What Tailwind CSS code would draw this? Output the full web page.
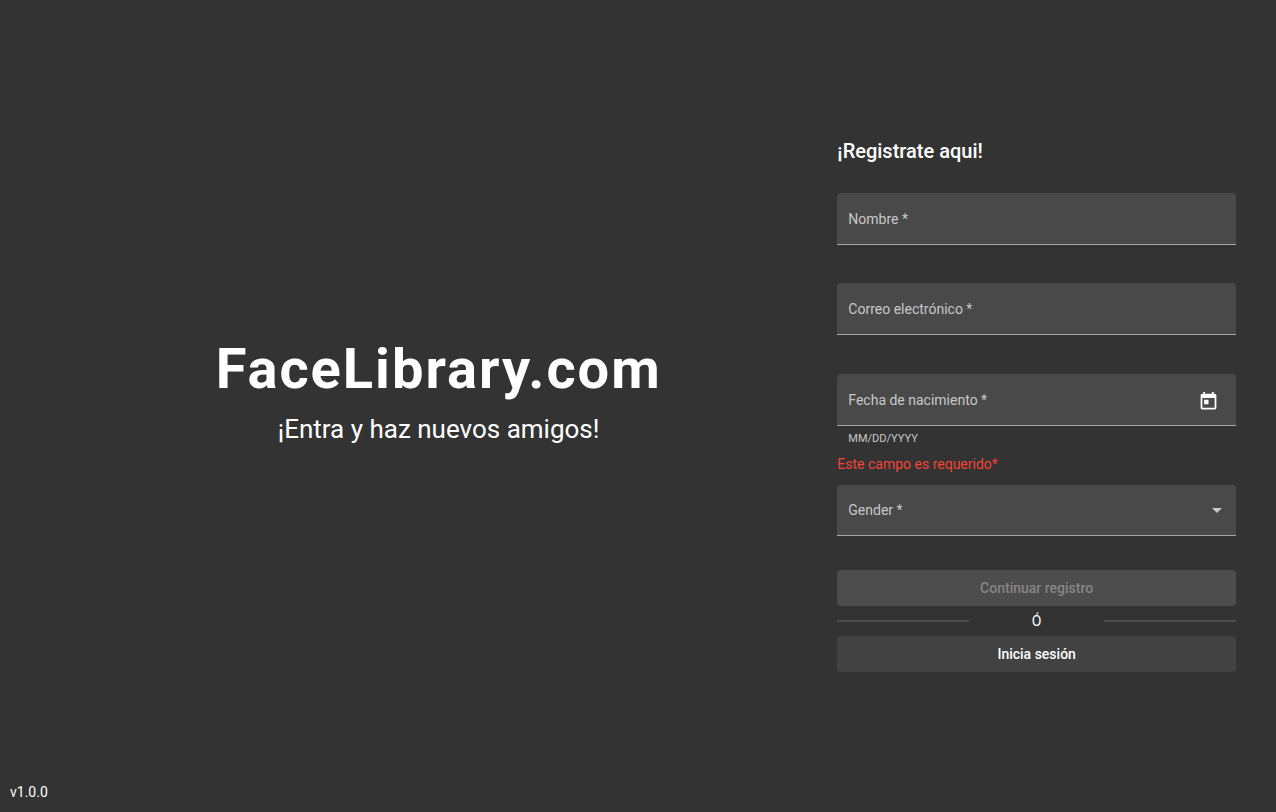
<!DOCTYPE html>
<html lang="es">
<head>
<meta charset="utf-8">
<meta name="viewport" content="width=device-width, initial-scale=1">
<title>FaceLibrary.com</title>
<script src="https://cdn.jsdelivr.net/npm/@tailwindcss/browser@4"></script>
</head>
<body class="flex min-h-screen flex-col bg-[#333333] font-[Roboto,sans-serif] text-sm text-white">
  <main class="grid flex-1 grid-cols-1 items-center px-10 pt-6 md:grid-cols-3">
    <section class="pb-6 text-center md:col-span-2">
      <h1 class="text-[56px] leading-16 font-bold tracking-[2px]">FaceLibrary.com</h1>
      <p class="mt-3 text-[26px] leading-8">¡Entra y haz nuevos amigos!</p>
    </section>

    <form class="flex flex-col">
      <h2 class="mb-[26px] text-xl leading-8 font-medium">¡Registrate aqui!</h2>

      <div class="relative mb-[38px]">
        <input id="name" type="text" required class="block h-[52px] w-full rounded-t border-b border-[#a6a6a6] bg-[#494949] px-[11px] outline-none">
        <label for="name" class="pointer-events-none absolute inset-0 flex items-center px-[11px] text-[#c8c8c8]">Nombre *</label>
      </div>

      <div class="relative mb-[39px]">
        <input id="email" type="email" required class="block h-[52px] w-full rounded-t border-b border-[#a6a6a6] bg-[#494949] px-[11px] outline-none">
        <label for="email" class="pointer-events-none absolute inset-0 flex items-center px-[11px] text-[#c8c8c8]">Correo electrónico *</label>
      </div>

      <div class="relative">
        <input id="birth" type="text" required aria-describedby="birth-hint birth-error" class="block h-[52px] w-full rounded-t border-b border-[#a6a6a6] bg-[#494949] px-[11px] outline-none">
        <label for="birth" class="pointer-events-none absolute inset-0 flex items-center px-[11px] text-[#c8c8c8]">Fecha de nacimiento *</label>
        <button type="button" aria-label="Abrir calendario" class="absolute inset-y-0 right-[7px] flex w-10 items-center justify-center pt-[3px]">
          <svg class="size-[21px]" viewBox="0 0 24 24" fill="currentColor" aria-hidden="true"><path d="M19 3h-1V1h-2v2H8V1H6v2H5c-1.11 0-1.99.9-1.99 2L3 19c0 1.1.89 2 2 2h14c1.1 0 2-.9 2-2V5c0-1.1-.9-2-2-2zm0 16H5V8h14v11zM7 10h5v5H7z"/></svg>
        </button>
      </div>
      <p id="birth-hint" class="mt-[5px] px-[11px] text-[11px] leading-4 text-[#c8c8c8]">MM/DD/YYYY</p>
      <p id="birth-error" class="mt-[7px] mb-[11px] leading-5 text-[#f44336]">Este campo es requerido*</p>

      <div class="relative mb-[34px]">
        <select id="gender" required class="block h-[51px] w-full appearance-none rounded-t border-b border-[#a6a6a6] bg-[#494949] px-[11px] outline-none">
          <option value=""></option>
        </select>
        <label for="gender" class="pointer-events-none absolute inset-0 flex items-center px-[11px] text-[#c8c8c8]">Gender *</label>
        <span class="pointer-events-none absolute inset-y-0 right-[14px] flex items-center">
          <svg class="h-[5px] w-[10px]" viewBox="0 0 10 5" fill="#c8c8c8" aria-hidden="true"><path d="M0 0h10L5 5z"/></svg>
        </span>
      </div>

      <button type="submit" disabled class="h-9 rounded bg-[#4d4d4d] font-medium text-[#858585]">Continuar registro</button>
      <div class="flex h-[30px] items-center justify-between">
        <span class="h-[2px] w-[33%] bg-[#4d4d4d]"></span>
        <span>Ó</span>
        <span class="h-[2px] w-[33%] bg-[#4d4d4d]"></span>
      </div>
      <button type="button" class="h-9 rounded bg-[#424242] font-medium">Inicia sesión</button>
    </form>
  </main>
  <footer class="px-[10px] pb-[10px] leading-5">v1.0.0</footer>
</body>
</html>
